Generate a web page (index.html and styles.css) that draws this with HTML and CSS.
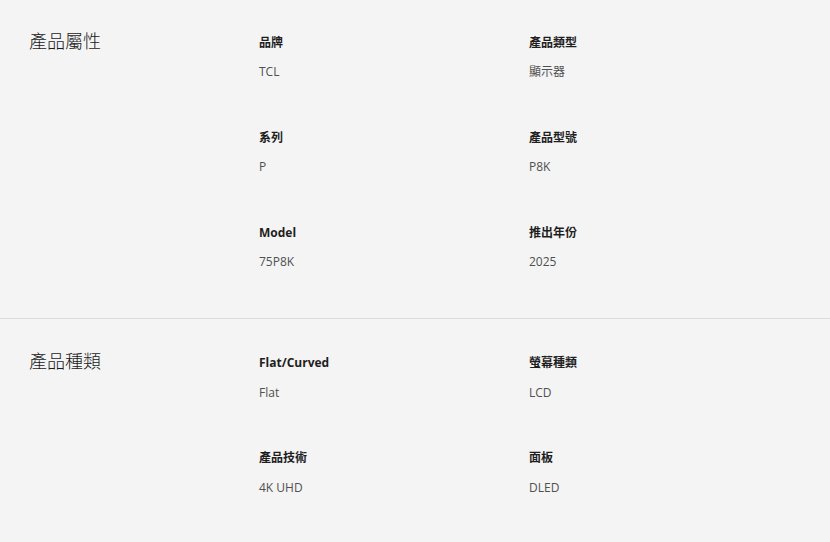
FILE: index.html
```html
<!DOCTYPE html>
<html lang="zh-Hant">
<head>
<meta charset="utf-8">
<link rel="stylesheet" href="styles.css">
</head>
<body>
<section class="spec">
  <h2 class="spec-title">產品屬性</h2>
  <div class="spec-grid">
    <div class="item"><div class="label">品牌</div><div class="value">TCL</div></div>
    <div class="item"><div class="label">產品類型</div><div class="value">顯示器</div></div>
    <div class="item"><div class="label">系列</div><div class="value">P</div></div>
    <div class="item"><div class="label">產品型號</div><div class="value">P8K</div></div>
    <div class="item"><div class="label">Model</div><div class="value">75P8K</div></div>
    <div class="item"><div class="label">推出年份</div><div class="value">2025</div></div>
  </div>
</section>
<section class="spec">
  <h2 class="spec-title">產品種類</h2>
  <div class="spec-grid">
    <div class="item"><div class="label">Flat/Curved</div><div class="value">Flat</div></div>
    <div class="item"><div class="label">螢幕種類</div><div class="value">LCD</div></div>
    <div class="item"><div class="label">產品技術</div><div class="value">4K UHD</div></div>
    <div class="item"><div class="label">面板</div><div class="value">DLED</div></div>
  </div>
</section>
</body>
</html>
```
FILE: styles.css
```css
html, body {
  margin: 0;
  padding: 0;
  background: #f4f4f4;
}
body {
  font-family: "Open Sans", "Noto Sans CJK TC", sans-serif;
  color: #222;
}
.spec {
  display: grid;
  grid-template-columns: 230px 270px 270px;
  align-items: start;
  padding: 33px 0 46px 29px;
  border-bottom: 1px solid #dcdcdc;
}
.spec + .spec {
  padding-top: 34px;
  border-bottom: none;
}
.spec + .spec .value {
  margin-top: 10px;
}
.spec-title {
  margin: 0;
  font-size: 18px;
  font-weight: 300;
  line-height: 14px;
  color: #1a1a1a;
  font-family: "Noto Sans CJK TC", sans-serif;
}
.spec-grid {
  grid-column: 2 / 4;
  display: grid;
  grid-template-columns: 270px 270px;
  row-gap: 46px;
}
.spec + .spec .spec-grid {
  row-gap: 45px;
}
.label {
  font-size: 12px;
  font-weight: 700;
  line-height: 20px;
  color: #1e1e1e;
}
.value {
  margin-top: 9px;
  font-size: 12px;
  line-height: 20px;
  color: #505050;
}
```
